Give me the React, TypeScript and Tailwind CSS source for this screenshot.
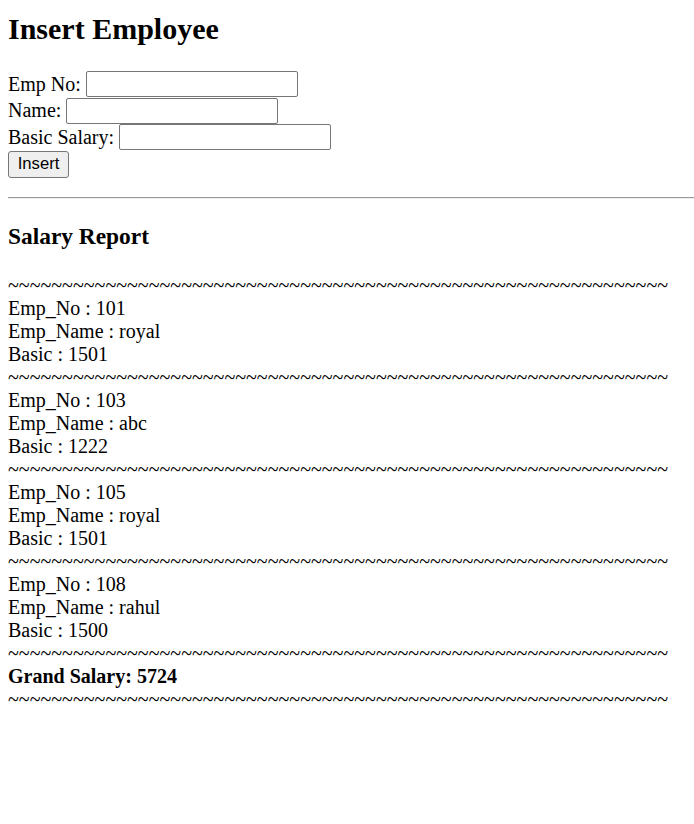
import React from "react";

const TILDES = "~".repeat(61);

const records = [
  { no: 101, name: "royal", basic: 1501 },
  { no: 103, name: "abc", basic: 1222 },
  { no: 105, name: "royal", basic: 1501 },
  { no: 108, name: "rahul", basic: 1500 },
];

function Field({ label }: { label: string }) {
  return (
    <div className="flex h-[26.5px] items-center">
      <span className="leading-[23px]">{label}</span>
      <input
        type="text"
        className="ml-[5px] box-border h-[26px] w-[212px] rounded-[2px] border border-[#767676] bg-white px-[3px] font-['Liberation_Sans',sans-serif] text-[16.67px] outline-none"
      />
    </div>
  );
}

function Line({ children, bold }: { children: React.ReactNode; bold?: boolean }) {
  return (
    <div className={`h-[23px] whitespace-pre leading-[23px] ${bold ? "font-bold" : ""}`}>{children}</div>
  );
}

export default function App() {
  return (
    <div className="min-h-[824px] w-[694px] bg-white pl-2 font-['Liberation_Serif',serif] text-[20px] text-black">
      <h1 className="pt-[12px] text-[30px] font-bold leading-[34px]">Insert Employee</h1>
      <form className="mt-[25px]" onSubmit={(e) => e.preventDefault()}>
        <Field label="Emp No:" />
        <Field label="Name:" />
        <Field label="Basic Salary:" />
        <div className="flex h-[27px] items-start">
          <button
            type="submit"
            className="box-border h-[27px] w-[61px] rounded-[3px] border border-[#767676] bg-[#efefef] font-['Liberation_Sans',sans-serif] text-[16.67px] leading-none text-black"
          >
            Insert
          </button>
        </div>
      </form>
      <div className="mt-[19px] h-[2px] border-t border-b border-t-[#9a9a9a] border-b-[#eeeeee]" />
      <h3 className="mt-[24px] text-[23.4px] font-bold leading-[27px]">Salary Report</h3>
      <div className="mt-[24px]">
        {records.map((r) => (
          <React.Fragment key={r.no}>
            <Line>{TILDES}</Line>
            <Line>Emp_No : {r.no}</Line>
            <Line>Emp_Name : {r.name}</Line>
            <Line>Basic : {r.basic}</Line>
          </React.Fragment>
        ))}
        <Line>{TILDES}</Line>
        <Line bold>Grand Salary: 5724</Line>
        <Line>{TILDES}</Line>
      </div>
    </div>
  );
}
